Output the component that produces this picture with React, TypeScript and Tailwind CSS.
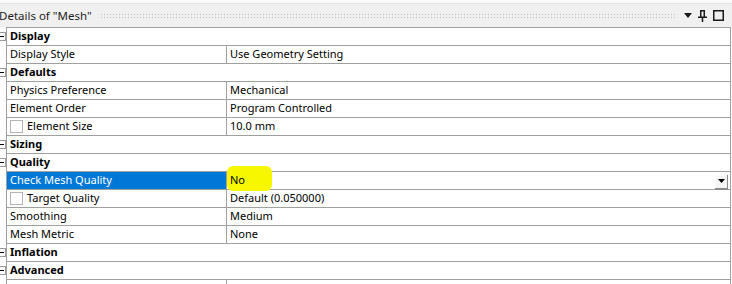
import React from 'react';

type Row =
  | { kind: 'group'; label: string }
  | { kind: 'prop'; label: string; value: string; check?: boolean; selected?: boolean };

const rows: Row[] = [
  { kind: 'group', label: 'Display' },
  { kind: 'prop', label: 'Display Style', value: 'Use Geometry Setting' },
  { kind: 'group', label: 'Defaults' },
  { kind: 'prop', label: 'Physics Preference', value: 'Mechanical' },
  { kind: 'prop', label: 'Element Order', value: 'Program Controlled' },
  { kind: 'prop', label: 'Element Size', value: '10.0 mm', check: true },
  { kind: 'group', label: 'Sizing' },
  { kind: 'group', label: 'Quality' },
  { kind: 'prop', label: 'Check Mesh Quality', value: 'No', selected: true },
  { kind: 'prop', label: 'Target Quality', value: 'Default (0.050000)', check: true },
  { kind: 'prop', label: 'Smoothing', value: 'Medium' },
  { kind: 'prop', label: 'Mesh Metric', value: 'None' },
  { kind: 'group', label: 'Inflation' },
  { kind: 'group', label: 'Advanced' },
  { kind: 'prop', label: '', value: '' },
];

const font = { fontFamily: '"Segoe UI", "Noto Sans", sans-serif' };

function MinusBox() {
  return (
    <span className="-ml-[2px] flex h-[9px] w-[8px] items-center justify-center border border-[#9a9a9a] bg-white">
      <span className="h-px w-[4px] bg-black" />
    </span>
  );
}

function CheckBox() {
  return <span className="mr-[4px] inline-block h-[13px] w-[13px] shrink-0 border border-[#b4b4b4] bg-white" />;
}

function DropButton() {
  return (
    <span className="mr-[2px] mt-[3px] flex h-[15px] w-[13px] items-center justify-center border-b-2 border-r border-[#8a8a8a] bg-[#f4f4f4] shadow-[inset_1px_1px_0_#fff]">
      <svg width="7" height="4" viewBox="0 0 7 4">
        <path d="M0 0H7L3.5 4Z" fill="#000" />
      </svg>
    </span>
  );
}

export default function App() {
  return (
    <div className="h-[284px] w-[732px] overflow-hidden bg-white text-[11px] text-black" style={font}>
      <div className="h-[3px] bg-[#f9f9f9]" />
      <div className="h-px bg-[#e6e6e6]" />
      <div className="flex h-[23px] items-center bg-[#f0f0f0] pr-[8px]">
        <span className="-ml-[1px] text-[11.5px] leading-none text-[#1e1e1e]">Details of "Mesh"</span>
        <div className="mx-[8px] mt-[1px] h-[6px] flex-1 bg-[radial-gradient(#b9b9b9_0.6px,transparent_0.7px)] bg-[length:3px_3px]" />
        <div className="flex items-center gap-[6px]">
          <svg width="8" height="5" viewBox="0 0 8 5">
            <path d="M0 0H8L4 5Z" fill="#1a1a1a" />
          </svg>
          <svg width="9" height="12" viewBox="0 0 9 12">
            <path d="M2 0.75H7M2.75 0.75V7M6.25 0.75V7M0 7.25H9M4.5 7.25V12" stroke="#1a1a1a" strokeWidth="1.5" fill="none" />
          </svg>
          <svg width="11" height="11" viewBox="0 0 11 11">
            <rect x="0.75" y="0.75" width="9.5" height="9.5" stroke="#1a1a1a" strokeWidth="1.5" fill="none" />
          </svg>
        </div>
      </div>
      <div className="flex">
        <div className="w-[6px] shrink-0 overflow-hidden">
          {rows.map((r, i) => (
            <div key={i} className="flex h-[18px] items-center">
              {r.kind === 'group' && <MinusBox />}
            </div>
          ))}
        </div>
        <div className="w-[725px] border-l border-t border-r border-[#a0a0a0]">
          {rows.map((r, i) =>
            r.kind === 'group' ? (
              <div key={i} className="flex h-[18px] items-center border-b border-[#a0a0a0] pl-[3px] font-bold">
                {r.label}
              </div>
            ) : (
              <div key={i} className="flex h-[18px] border-b border-[#a0a0a0]">
                <div
                  className={
                    'flex w-[220px] shrink-0 items-center border-r border-[#a0a0a0] pl-[3px] ' +
                    (r.selected ? 'bg-[#0078d7] text-white' : '')
                  }
                >
                  {r.check && <CheckBox />}
                  {r.label}
                </div>
                <div className="relative flex flex-1 items-center pl-[3px]">
                  {r.selected && (
                    <span className="absolute -top-[6px] left-0 h-[25px] w-[45px] rounded-[6px] bg-[#f7f700]" />
                  )}
                  <span className="relative flex-1">{r.value}</span>
                  {r.selected && <DropButton />}
                </div>
              </div>
            )
          )}
        </div>
      </div>
    </div>
  );
}
